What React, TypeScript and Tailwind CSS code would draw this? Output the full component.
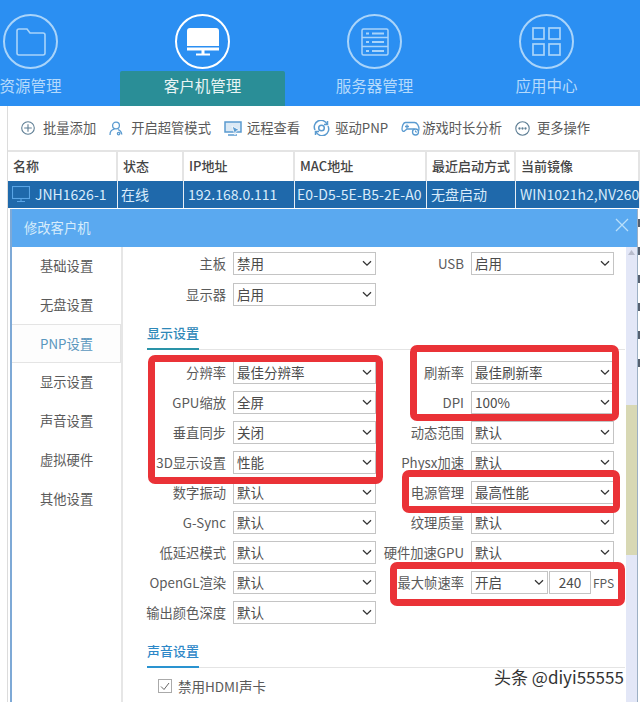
import React from "react";

const FONT = { fontFamily: '"Noto Sans CJK SC", "Noto Sans", sans-serif' };

function Chevron() {
  return (
    <svg width="10" height="7" viewBox="0 0 10 7" className="shrink-0">
      <path d="M1 1.2 L5 5.2 L9 1.2" fill="none" stroke="#333" strokeWidth="1.3" />
    </svg>
  );
}

function Select({ value, className = "w-[143px]" }: { value: string; className?: string }) {
  return (
    <div className={`h-[23px] ${className} border border-[#c4c4c4] bg-white flex items-center justify-between pl-[3px] pr-[3px] text-[13.5px] text-[#4a4a4a] shrink-0`}>
      <span>{value}</span>
      <Chevron />
    </div>
  );
}

function Row({ label, value, labelW }: { label: string; value: string; labelW: string }) {
  return (
    <div className="flex items-center h-[23px]">
      <div className={`${labelW} text-[13.3px] text-[#5a5a5a] whitespace-nowrap pr-[7px] shrink-0 flex justify-end`}>{label}</div>
      <Select value={value} />
    </div>
  );
}

function NavItem({ label, active, children }: { label: string; active?: boolean; children: React.ReactNode }) {
  return (
    <div className="w-[165px] h-[106px] shrink-0 flex flex-col items-center relative">
      {active && <div className="absolute left-0 right-0 top-[71px] bottom-0 bg-[#2a8e97] rounded-t-[2px]" />}
      <div className={`relative mt-[14px] w-[55px] h-[55px] rounded-full border-[2px] flex items-center justify-center ${active ? "border-white" : "border-[#a9d4fa]"}`}>
        {children}
      </div>
      <div className={`relative mt-[6px] text-[15.5px] leading-[20px] whitespace-nowrap ${active ? "text-[#e8f4f4]" : "text-[#b5dafc]"}`}>{label}</div>
    </div>
  );
}

function ToolItem({ icon, label, gap }: { icon: React.ReactNode; label: string; gap: string }) {
  return (
    <div className={`flex items-center ${gap} whitespace-nowrap text-[13.3px] text-[#5a5a5a] shrink-0`}>
      {icon}
      <span>{label}</span>
    </div>
  );
}

const ic = "#5b9bd0";

function Th({ w, label }: { w: string; label: string }) {
  return <div className={`${w} shrink-0 h-full border-r-2 border-[#e4e4e4] pl-[5px] pb-[1px] flex items-center text-[13px] font-medium text-[#444] whitespace-nowrap overflow-hidden`}>{label}</div>;
}
function Td({ w, children }: { w: string; children: React.ReactNode }) {
  return <div className={`${w} shrink-0 h-full border-r border-[#e6eef5] pl-[4px] flex items-center text-[14px] text-[#d9ecfb] whitespace-nowrap overflow-hidden`}>{children}</div>;
}

function Annot({ className }: { className: string }) {
  return <div className={`absolute border-[7px] border-[#ea3237] rounded-[7px] pointer-events-none ${className}`} />;
}

function SectionTitle({ label, line, text, className }: { label: string; line: string; text: string; className: string }) {
  return (
    <div className={`${className} ml-[24px] mr-[1px] border-b border-[#e4e4e4] h-[27px] flex items-start`}>
      <div className={`h-[27px] border-b-2 ${line} ${text} text-[13px] font-medium leading-[20px]`}>{label}</div>
    </div>
  );
}

export default function App() {
  const side = ["基础设置", "无盘设置", "PNP设置", "显示设置", "声音设置", "虚拟硬件", "其他设置"];
  return (
    <div className="w-[640px] h-[702px] overflow-hidden relative bg-white" style={FONT}>
      {/* header */}
      <div className="h-[106px] bg-[#2b8ff2] flex -ml-[52px] w-[692px] gap-[7px]">
        <NavItem label="资源管理">
          <svg width="32" height="30" viewBox="0 0 32 30" fill="none" stroke="#a9d4fa" strokeWidth="1.6"><path d="M2 4 a2 2 0 0 1 2-2 h8 l3 4 h13 a2 2 0 0 1 2 2 v18 a2 2 0 0 1-2 2 H4 a2 2 0 0 1-2-2 Z" /></svg>
        </NavItem>
        <NavItem label="客户机管理" active>
          <svg width="32" height="28" viewBox="0 0 32 28"><path d="M3 0 h26 a3 3 0 0 1 3 3 v15 H0 V3 a3 3 0 0 1 3-3 Z" fill="#fff" /><rect x="0" y="19.5" width="32" height="3" fill="#fff" /><rect x="14.5" y="22" width="3" height="4" fill="#fff" /><rect x="9" y="25.5" width="14" height="2" fill="#fff" /></svg>
        </NavItem>
        <NavItem label="服务器管理">
          <svg width="28" height="28" viewBox="0 0 28 28" fill="none" stroke="#a9d4fa" strokeWidth="1.5"><rect x="1" y="1" width="26" height="26" rx="1.5" /><path d="M1 9.5 H27 M1 18.5 H27" /><path d="M5 5.5 h3 M11 5.5 h12 M5 14 h3 M11 14 h12 M5 23 h3 M11 23 h12" strokeWidth="1.8" /></svg>
        </NavItem>
        <NavItem label="应用中心">
          <svg width="29" height="29" viewBox="0 0 29 29" fill="none" stroke="#a9d4fa" strokeWidth="1.7"><rect x="1" y="1" width="11" height="11" /><rect x="17" y="1" width="11" height="11" /><rect x="1" y="17" width="11" height="11" /><rect x="17" y="17" width="11" height="11" /></svg>
        </NavItem>
      </div>

      <div className="ml-[7px] border-l border-[#dcdcdc] h-[596px]">
        {/* toolbar */}
        <div className="h-[44px] flex items-center pl-[13px] gap-[13px]">
          <ToolItem gap="gap-[8px]" label="批量添加" icon={<svg width="14" height="14" viewBox="0 0 14 14" fill="none" stroke="#5f7f95" strokeWidth="1.1"><circle cx="7" cy="7" r="6.3" /><path d="M7 3.2 V10.8 M3.2 7 H10.8" /></svg>} />
          <ToolItem gap="gap-[8px]" label="开启超管模式" icon={<svg width="14" height="15" viewBox="0 0 14 15" fill="none" stroke={ic} strokeWidth="1.3"><circle cx="7" cy="4.5" r="3.4" /><path d="M1 14 C1 10.5 3 8.5 5.5 8.2 M9 8.5 C11 9.2 12.5 11 12.8 13.5" /><circle cx="9.6" cy="12.6" r="1.2" /></svg>} />
          <ToolItem gap="gap-[5px]" label="远程查看" icon={<svg width="18" height="15" viewBox="0 0 18 15" fill="none" stroke={ic} strokeWidth="1.5"><path d="M1 1 H17 V11 H1 Z" fill="#dbe9f5" /><path d="M4 14 H13" /><path d="M8 5 L15.5 9 L12 10.2 L11 14 Z" fill={ic} stroke="#fff" strokeWidth="0.8" /></svg>} />
          <ToolItem gap="gap-[5px]" label="驱动PNP" icon={<svg width="17" height="16" viewBox="0 0 17 16" fill="none" stroke={ic} strokeWidth="1.5"><path d="M2 10 A6.5 6.5 0 0 1 14 4" /><path d="M15 6 A6.5 6.5 0 0 1 3 12" /><circle cx="8.5" cy="8" r="2.8" /><path d="M14.5 1 V4.5 H11" /><path d="M2.5 15 V11.5 H6" /></svg>} />
          <ToolItem gap="gap-[2px]" label="游戏时长分析" icon={<svg width="19" height="16" viewBox="0 0 19 16" fill="none" stroke={ic} strokeWidth="1.3"><path d="M4.5 2.5 H13.5 C16 2.5 18 6 18 9 C18 11 16.5 12 15.5 11 L13 9 H6 L3.5 11 C2.5 12 1 11 1 9 C1 6 2.5 2.5 4.5 2.5 Z" /><path d="M4 6.5 H8 M6 4.5 V8.5" /><circle cx="14.5" cy="12" r="3" fill="#fff" /><path d="M14.5 10.5 V12 H16" strokeWidth="1" /></svg>} />
          <ToolItem gap="gap-[7px]" label="更多操作" icon={<svg width="15" height="15" viewBox="0 0 15 15" fill="none" stroke="#5f7f95" strokeWidth="1.1"><circle cx="7.5" cy="7.5" r="6.7" /><circle cx="4.5" cy="7.5" r="0.6" fill="#5f7f95" /><circle cx="7.5" cy="7.5" r="0.6" fill="#5f7f95" /><circle cx="10.5" cy="7.5" r="0.6" fill="#5f7f95" /></svg>} />
        </div>

        {/* table */}
        <div className="border-t-2 border-[#e4e4e4] h-[31px] flex">
          <Th w="w-[110px]" label="名称" />
          <Th w="w-[66px]" label="状态" />
          <Th w="w-[111px]" label="IP地址" />
          <Th w="w-[132px]" label="MAC地址" />
          <Th w="w-[89px]" label="最近启动方式" />
          <Th w="w-[124px]" label="当前镜像" />
        </div>
        <div className="h-[27px] bg-[#1f69ab] flex">
          <Td w="w-[110px]">
            <svg width="18" height="17" viewBox="0 0 18 17" fill="none" stroke="#5aa5e6" strokeWidth="1.1" className="mr-[5px] shrink-0"><rect x="0.5" y="0.5" width="17" height="12" /><path d="M9 12.5 V15.5 M5 15.5 H13" /></svg>
            JNH1626-1
          </Td>
          <Td w="w-[66px]"><span className="-ml-[1px]">在线</span></Td>
          <Td w="w-[111px]">192.168.0.111</Td>
          <Td w="w-[132px]"><span className="-ml-[2px] tracking-[0.1px]">E0-D5-5E-B5-2E-A0</span></Td>
          <Td w="w-[89px]">无盘启动</Td>
          <Td w="w-[124px]">WIN1021h2,NV260</Td>
        </div>

        {/* modal */}
        <div className="mt-[1px] ml-[2px] w-[628px] h-[493px] bg-white border-l-2 border-r border-l-[#7ea9d6] border-r-[#9db0c4]">
          <div className="h-[38px] bg-[#5aa9f0] flex items-center justify-between pl-[12px] pr-[8px]">
            <span className="text-[13.3px] text-[#d6ecfb]">修改客户机</span>
            <svg width="14" height="14" viewBox="0 0 14 14" fill="none" stroke="#b9dffa" strokeWidth="1.3" className="mb-[6px]"><path d="M1 1 L13 13 M13 1 L1 13" /></svg>
          </div>
          <div className="flex h-[455px]">
            {/* sidebar */}
            <div className="w-[111px] shrink-0 border-r-2 border-[#e6e6e6] flex flex-col">
              {side.map((s) => (
                <div key={s} className={`h-[38.7px] shrink-0 flex items-center pl-[28px] text-[13.3px] ${s === "PNP设置" ? "text-[#5a97bd] border border-l-0 border-[#e4e4e4] bg-[#fdfdfd]" : "text-[#5a5a5a]"}`}>{s}</div>
              ))}
            </div>
            {/* content */}
            <div className="flex-1 min-w-0 pt-[5px]">
              <div className="flex pl-[15px]">
                <div className="flex flex-col gap-[8px]">
                  <Row labelW="w-[95px]" label="主板" value="禁用" />
                  <Row labelW="w-[95px]" label="显示器" value="启用" />
                </div>
                <div className="ml-[10px]"><Row labelW="w-[85px]" label="USB" value="启用" /></div>
              </div>

              <SectionTitle className="mt-[17px]" label="显示设置" line="border-[#2a93a8]" text="text-[#2e88b8]" />

              <div className="mt-[11px] pl-[15px] flex">
                <div className="flex flex-col gap-[7px]">
                  {[["分辨率","最佳分辨率"],["GPU缩放","全屏"],["垂直同步","关闭"],["3D显示设置","性能"],["数字振动","默认"],["G-Sync","默认"],["低延迟模式","默认"],["OpenGL渲染","默认"],["输出颜色深度","默认"]].map(([l,v]) => (
                    <Row key={l} labelW="w-[95px]" label={l} value={v} />
                  ))}
                </div>
                <div className="ml-[10px] flex flex-col gap-[7px]">
                  {[["刷新率","最佳刷新率"],["DPI","100%"],["动态范围","默认"],["Physx加速","默认"],["电源管理","最高性能"],["纹理质量","默认"],["硬件加速GPU","默认"]].map(([l,v]) => (
                    <Row key={l} labelW="w-[85px]" label={l} value={v} />
                  ))}
                  <div className="flex items-center h-[23px]">
                    <div className="w-[85px] text-[13.3px] text-[#5a5a5a] whitespace-nowrap pr-[7px] shrink-0 flex justify-end">最大帧速率</div>
                    <Select value="开启" className="w-[77px]" />
                    <div className="ml-[1px] w-[42px] h-[23px] border border-[#c4c4c4] flex items-center justify-center text-[13.5px] text-[#4a4a4a]">240</div>
                    <div className="ml-[2px] text-[12px] text-[#5a5a5a]">FPS</div>
                  </div>
                </div>
              </div>

              <SectionTitle className="mt-[17px]" label="声音设置" line="border-[#2a93d0]" text="text-[#2e88c8]" />
              <div className="mt-[8px] ml-[35px] flex items-center gap-[6px] text-[13.5px] text-[#5a5a5a]">
                <div className="w-[14px] h-[14px] border border-[#aaa] flex items-center justify-center">
                  <svg width="10" height="9" viewBox="0 0 10 9" fill="none" stroke="#666" strokeWidth="1"><path d="M1 4.5 L4 7.5 L9 1" /></svg>
                </div>
                禁用HDMI声卡
              </div>
            </div>
            {/* scrollbar */}
            <div className="w-[11px] shrink-0 bg-[#e3e7f7] flex flex-col">
              <div className="h-[11px] flex items-center justify-center">
                <svg width="7" height="5" viewBox="0 0 7 5"><path d="M0 5 L3.5 0 L7 5 Z" fill="#b8bccc" /></svg>
              </div>
              <div className="mt-[147px] h-[150px] bg-[#d8d8b4]" />
            </div>
          </div>
        </div>
      </div>

      {/* red annotations lying over the form */}
      <Annot className="left-[148px] top-[355px] w-[235px] h-[129px]" />
      <Annot className="left-[410px] top-[345px] w-[209px] h-[76px]" />
      <Annot className="left-[402px] top-[470px] w-[218px] h-[43px]" />
      <Annot className="left-[390px] top-[562px] w-[235px] h-[44px]" />

      {/* grid marks of the table behind the modal */}
      <div className="absolute right-0 top-[219px] flex flex-col gap-[20px]">
        {[0, 1, 2, 3, 4, 5].map((i) => (
          <div key={i} className="w-[2px] h-[8px] bg-[#556070]" />
        ))}
      </div>

      {/* watermark */}
      <div className="absolute left-[494px] top-[665px] text-[17px] leading-[24px] text-[#333] whitespace-nowrap" style={{ textShadow: "0 0 2px #fff, 0 0 2px #fff" }}>头条 @diyi55555</div>
    </div>
  );
}
